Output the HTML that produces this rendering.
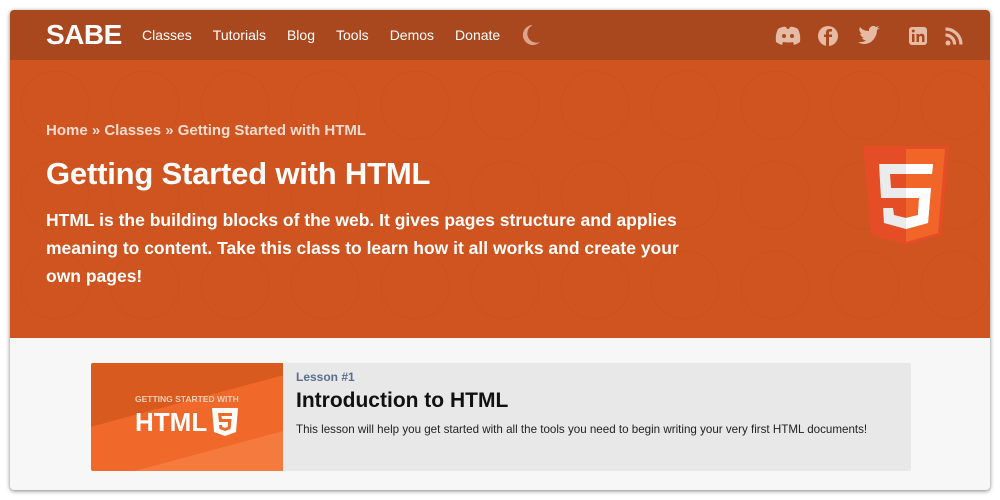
<!DOCTYPE html>
<html><head><style>
*{margin:0;padding:0;box-sizing:border-box}
body{width:1000px;height:500px;background:#fff;font-family:"Liberation Sans",sans-serif;position:relative;overflow:hidden}
.frame{position:absolute;left:10px;top:10px;width:980px;height:480px;border-radius:4px;overflow:hidden;box-shadow:0 1px 4px rgba(0,0,0,.5);background:#f7f7f7}
.nav{position:absolute;left:0;top:0;width:980px;height:50px;background:#a9481f}
.logo{position:absolute;left:36px;top:9px;color:#fff;font-weight:bold;font-size:28px;letter-spacing:-0.5px}
.links{position:absolute;left:132px;top:17px;color:#fff;font-size:14px}
.links span{margin-right:21px}
.hero{position:absolute;left:0;top:50px;width:980px;height:278px;background:#d0541f;background-image:radial-gradient(circle at 50% 50%,transparent 33px,rgba(0,0,0,.035) 34px,transparent 35px);background-size:90px 90px}
.hero .bc{position:absolute;left:36px;top:62px;color:#f3dccf;font-weight:bold;font-size:15px}
.hero h1{position:absolute;left:36px;top:96px;color:#fff;font-size:31px;font-weight:bold;letter-spacing:-0.2px}
.hero p{position:absolute;left:36px;top:146px;width:665px;color:#fff;font-size:17.5px;font-weight:bold;line-height:28px}
.card{position:absolute;left:81px;top:353px;width:820px;height:108px;background:#e8e8e8;border-radius:2px;overflow:hidden}
.img{position:absolute;left:0;top:0;width:192px;height:108px;background:linear-gradient(165deg,#d95a1f 0 40%,#f0692a 40% 75%,#f47a3e 75%)}
.ico{fill:#e6bba6}
</style></head><body>
<div class="frame">
<div class="nav">
<div class="logo">SABE</div>
<div class="links"><span>Classes</span><span>Tutorials</span><span>Blog</span><span>Tools</span><span>Demos</span><span>Donate</span></div>
<svg style="position:absolute;left:511px;top:14px" width="20" height="22" viewBox="0 0 20 22"><path fill="#dba58c" d="M12 1A10 10 0 1 0 19 18 8 8 0 0 1 12 1z"/></svg>
<svg style="position:absolute;left:765px;top:15px" width="200" height="24" viewBox="0 0 200 24">
<path class="ico" d="M3 4Q8 1 11 2L12 4Q13 3.5 14 4L15 2Q18 1 23 4Q26 10 25 17Q22 19 19 20L18 17Q15 18 8 17L7 20Q4 19 1 17Q0 10 3 4z"/>
<circle cx="9" cy="11" r="2" fill="#a9481f"/><circle cx="17" cy="11" r="2" fill="#a9481f"/>
<circle class="ico" cx="53" cy="11" r="10"/><path d="M54 21V12H57V9.5H54V7.5Q54 6.5 55.5 6.5H57V4H54.5Q51 4 51 7.5V9.5H49V12H51V21" fill="#a9481f"/>
<path class="ico" d="M83 17Q89 21 96 17Q102 12 102 5L105 3 102 3.5 104 1 101 2Q97 -1 94 4V6Q88 6 85 2Q83 6 87 9L85 8.5Q86 12 89 13H87Q88 15 91 15.5Q88 17.5 83 17z"/>
<rect class="ico" x="134" y="2" width="18" height="18" rx="3"/><rect x="137" y="9" width="2.5" height="8" fill="#a9481f"/><circle cx="138.3" cy="6" r="1.5" fill="#a9481f"/><path d="M141.5 17V9H144V10Q145 8.7 147 8.8Q149.5 9 149.5 12V17H147V12.5Q147 11 145.8 11Q144 11 144 12.8V17z" fill="#a9481f"/>
<circle class="ico" cx="173" cy="18" r="2.5"/><path d="M170.5 10A9 9 0 0 1 179.5 19.5" stroke="#e6bba6" stroke-width="3.2" fill="none"/><path d="M170.5 4A15.5 15.5 0 0 1 186 19.5" stroke="#e6bba6" stroke-width="3.2" fill="none"/>
</svg>
</div>
<div class="hero">
<div class="bc">Home » Classes » Getting Started with HTML</div>
<h1>Getting Started with HTML</h1>
<p>HTML is the building blocks of the web. It gives pages structure and applies meaning to content. Take this class to learn how it all works and create your own pages!</p>
<svg style="position:absolute;left:851px;top:86px" width="90" height="100" viewBox="0 0 90 100">
<path d="M2 0H88L80 89 45 99 10 89z" fill="#e44d26"/><path d="M45 3V96L77 87 84 3z" fill="#f16529"/>
<path d="M18 18H72L71 28H29L30 42H70L67 77 45 83 23 77 22 62H32L33 69 45 72 57 69 58 52H20z" fill="#ebebeb"/>
<path d="M45 18H72L71 28H45zM45 42H70L67 77 45 83V72L57 69 58 52H45z" fill="#fff"/>
</svg>
</div>
<div class="card">
<div class="img">
<div style="position:absolute;left:44px;top:31px;color:#f6cdb4;font-size:8.5px;font-weight:bold">GETTING STARTED WITH</div>
<div style="position:absolute;left:44px;top:44px;color:#fff;font-size:26px;font-weight:bold">HTML</div>
<svg style="position:absolute;left:121px;top:45px" width="26" height="28" viewBox="0 0 26 28"><path d="M0 0H26L24 24 13 28 2 24z" fill="#fff"/><path d="M6 5H20V8H9.5L10 11H19.5L18.5 21 13 23 7.5 21 7 17H10L10.3 19 13 20 15.7 19 16 14H7z" fill="#f0692a"/></svg>
</div>
<div style="position:absolute;left:205px;top:7px;color:#5a6e8c;font-size:12px;font-weight:bold">Lesson #1</div>
<div style="position:absolute;left:205px;top:26px;color:#111;font-size:21px;font-weight:bold">Introduction to HTML</div>
<div style="position:absolute;left:205px;top:60px;color:#222;font-size:11.6px">This lesson will help you get started with all the tools you need to begin writing your very first HTML documents!</div>
</div>
</div>
</body></html>
